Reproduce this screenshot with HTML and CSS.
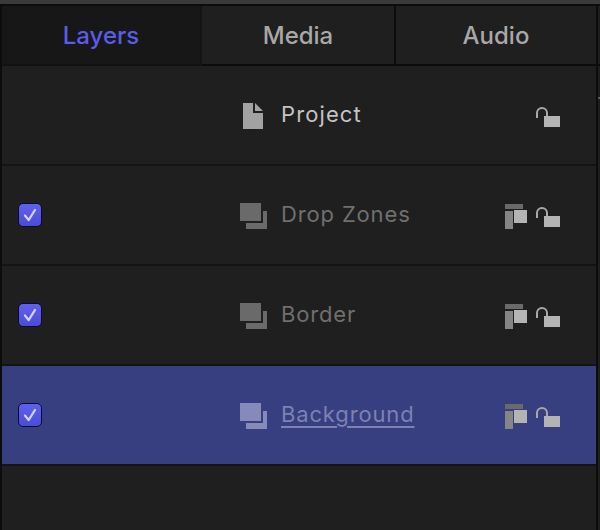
FILE: index.html
```html
<!DOCTYPE html>
<html lang="en">
<head>
<meta charset="utf-8">
<title>Layers</title>
<link rel="stylesheet" href="styles.css">
</head>
<body>
<svg class="defs" width="0" height="0" aria-hidden="true">
  <defs>
    <symbol id="layer" viewBox="0 0 27 26">
      <rect x="0" y="0" width="21" height="18"/>
      <path d="M23 8h4v18H6v-6h17z"/>
    </symbol>
    <symbol id="mode" viewBox="0 0 22 25">
      <rect class="dim2" x="0" y="0" width="18" height="5"/>
      <rect class="dim1" x="0" y="7" width="8" height="18"/>
      <rect class="bright" x="9" y="6" width="13" height="13"/>
    </symbol>
    <symbol id="lock" viewBox="0 0 24 21">
      <path class="shackle" d="M1 12V7a5 5 0 0 1 10 0v3" fill="none" stroke-width="2"/>
      <rect class="bright" x="8" y="10" width="16" height="11"/>
    </symbol>
    <symbol id="doc" viewBox="0 0 20 26">
      <path d="M0 0h10v10h10v16H0z"/>
      <path d="M12 0l8 8h-8z"/>
    </symbol>
  </defs>
</svg>
<div class="frame">
<main class="panel">
  <nav class="tabs">
    <div class="tab tab-active">Layers</div>
    <div class="tab tab-mid">Media</div>
    <div class="tab tab-last">Audio</div>
  </nav>
  <section class="row row-project">
    <span class="check-cell"></span>
    <svg class="icon-doc"><use href="#doc"/></svg>
    <span class="name">Project</span>
    <span class="tools">
      <svg class="icon-lock"><use href="#lock"/></svg>
    </span>
  </section>
  <section class="row row-dim">
    <span class="check-cell"><span class="check"><svg viewBox="0 0 24 24"><path d="M6.5 12.5l4 5 7-11"/></svg></span></span>
    <svg class="icon-layer"><use href="#layer"/></svg>
    <span class="name">Drop Zones</span>
    <span class="tools">
      <svg class="icon-mode"><use href="#mode"/></svg>
      <svg class="icon-lock"><use href="#lock"/></svg>
    </span>
  </section>
  <section class="row row-dim">
    <span class="check-cell"><span class="check"><svg viewBox="0 0 24 24"><path d="M6.5 12.5l4 5 7-11"/></svg></span></span>
    <svg class="icon-layer"><use href="#layer"/></svg>
    <span class="name">Border</span>
    <span class="tools">
      <svg class="icon-mode"><use href="#mode"/></svg>
      <svg class="icon-lock"><use href="#lock"/></svg>
    </span>
  </section>
  <section class="row row-selected">
    <span class="check-cell"><span class="check"><svg viewBox="0 0 24 24"><path d="M6.5 12.5l4 5 7-11"/></svg></span></span>
    <svg class="icon-layer"><use href="#layer"/></svg>
    <span class="name name-link">Background</span>
    <span class="tools">
      <svg class="icon-mode"><use href="#mode"/></svg>
      <svg class="icon-lock"><use href="#lock"/></svg>
    </span>
  </section>
  <div class="rest"></div>
</main>
<aside class="strip">
  <div class="strip-top"></div>
  <div class="strip-rest"></div>
</aside>
</div>
</body>
</html>
```
FILE: styles.css
```css
* { box-sizing: border-box; }
html, body { margin: 0; height: 100%; }
body {
  width: 600px;
  height: 530px;
  overflow: hidden;
  background: #3a3a3a;
  padding-top: 4px;
  font-family: Inter, "Liberation Sans", sans-serif;
}
.defs { display: block; height: 0; }
.frame { display: flex; height: 526px; background: #0c0c0c; padding-top: 2px; }
.panel {
  width: 598px;
  padding: 0 2px;
  display: flex;
  flex-direction: column;
}
.strip { flex: 1; display: flex; flex-direction: column; gap: 2px; }
.strip-top { height: 58px; background: #1e1e1e; }
.strip-rest { flex: 1; background: #1e1e1e; position: relative; }
.strip-rest::after {
  content: "";
  position: absolute;
  left: 0;
  top: 31px;
  width: 2px;
  height: 2px;
  background: #5a5a5a;
}
.tabs { display: grid; grid-template-columns: 198px 192px 200px; column-gap: 2px; height: 60px; }
.tab {
  background: #1f1f1f;
  color: #a8a8a8;
  font-size: 24px;
  font-weight: 550;
  display: flex;
  align-items: center;
  justify-content: center;
  height: 58px;
}
.tab-active {
  background: #171717;
  color: #5a5ce8;
  height: 60px;
  margin-right: -2px;
  border-right: 2px solid #141414;
  border-bottom: 2px solid #121212;
}
.row {
  height: 100px;
  background: #1f1f1f;
  border-bottom: 2px solid #141414;
  display: flex;
  align-items: center;
  padding-right: 36px;
}
.check-cell { width: 238px; padding-left: 16px; flex: none; display: flex; }
.check {
  width: 24px;
  height: 24px;
  border-radius: 5px;
  background: linear-gradient(#5f61ee, #4a4cd8);
  border: 1px solid #0c0c2c;
  display: block;
}
.check svg { display: block; width: 22px; height: 22px; fill: none; stroke: #d0d0fa; stroke-width: 2.4; stroke-linecap: round; stroke-linejoin: round; }
.icon-layer { width: 27px; height: 26px; flex: none; margin-top: 2px; fill: #6a6a6a; }
.icon-doc { width: 20px; height: 26px; margin-left: 3px; margin-top: 2px; flex: none; fill: #a2a2a2; }
.icon-mode { width: 22px; height: 25px; flex: none; margin-top: 3px; }
.icon-lock { width: 24px; height: 21px; flex: none; margin-top: 3px; }
.name {
  margin-left: 14px;
  margin-top: -2px;
  font-size: 22px;
  letter-spacing: 0.85px;
  color: #6f6f6f;
}
.row-project .name { margin-left: 18px; color: #c4c4c4; letter-spacing: 1.1px; }
.name-link { color: #7d81b4; text-decoration: underline; text-underline-offset: 4px; text-decoration-thickness: 2px; }
.tools { margin-left: auto; display: flex; align-items: center; gap: 9px; }
.bright { fill: #b4b4b4; }
.dim1 { fill: #858585; }
.dim2 { fill: #6a6a6a; }
.shackle { stroke: #a8a8a8; }
.row-selected { background: #373f80; }
.row-selected .icon-layer { fill: #858ab8; }
.row-selected .bright { fill: #c9cbe0; }
.row-selected .dim1 { fill: #9a9ec8; }
.row-selected .dim2 { fill: #6f74a8; }
.row-selected .shackle { stroke: #b4b8d8; }
.rest { flex: 1; background: #1f1f1f; }
```
